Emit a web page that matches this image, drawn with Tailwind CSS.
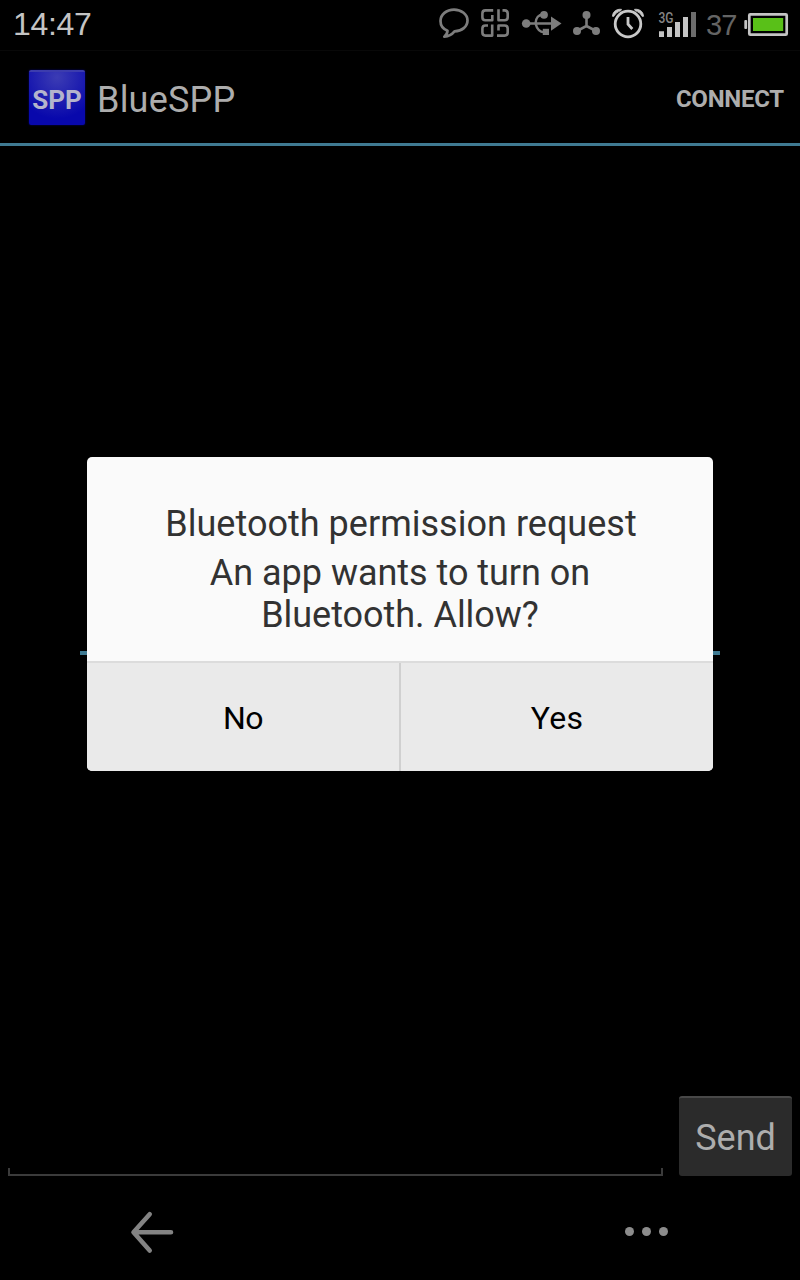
<!DOCTYPE html>
<html lang="en">
<head>
<meta charset="utf-8">
<title>BlueSPP</title>
<script src="https://cdn.jsdelivr.net/npm/@tailwindcss/browser@4"></script>
</head>
<body class="bg-black">
<div class="relative flex h-[1280px] w-[800px] flex-col overflow-hidden bg-black font-['Roboto',sans-serif]">
  <!-- Status bar -->
  <header class="flex h-[50px] items-start justify-between pl-[13px] font-['Liberation_Sans',sans-serif]">
    <span class="pt-[6px] text-[32px] leading-[36px] tracking-[-0.3px] text-[#c4c4c4]">14:47</span>
    <div class="flex h-[50px] items-start">
      <svg class="h-[50px] w-[39px]" viewBox="436 0 39 50" fill="none" stroke="#7d7d7d" stroke-width="2.7" stroke-linejoin="round"><path d="M447.500 30.700C443.500 29.200 440.500 25.500 440.500 21C440.500 14.500 446.500 9.600 454 9.600S467.500 14.500 467.500 20.500S462 31.200 454.500 31.400C452 34.500 448.500 36.400 444.300 36.700C446.300 35 447.400 33 447.500 30.700Z"/></svg>
      <svg class="h-[50px] w-[41px]" viewBox="475 0 41 50" fill="none" stroke="#7d7d7d" stroke-width="2.600" stroke-linejoin="round"><path d="M493.200 10.400H485.400Q482.400 10.400 482.400 13.400V17.300Q482.400 20.300 485.400 20.300H492.300V15M498.500 9.300V20.300H504.600Q507.700 20.300 507.700 17.300V13.400Q507.700 10.400 504.600 10.400H502.500M488 25.500H485.400Q482.400 25.500 482.400 28.500V32.600Q482.400 35.600 485.400 35.600H492.200V24.400M498.500 30.500V25.500H504.600Q507.700 25.500 507.700 28.500V32.600Q507.700 35.600 504.600 35.600H497"/></svg>
      <svg class="h-[50px] w-[51px]" viewBox="516 0 51 50" fill="#7d7d7d"><circle cx="526.200" cy="23.500" r="4.300"/><path d="M551 16.500L561.500 23.500L551 30.800Z"/><circle cx="544" cy="14.800" r="3.900"/><rect x="542.800" y="28.800" width="6.200" height="6.200"/><path d="M528 23.500H552M535.500 23.500C536 18 537.500 14.800 543 14.800M535.500 23.500C537 29 539 32.200 544 32.200" fill="none" stroke="#7d7d7d" stroke-width="2.500"/></svg>
      <svg class="h-[50px] w-[39px]" viewBox="567 0 39 50" fill="#7d7d7d"><circle cx="586.500" cy="14.900" r="4"/><circle cx="577" cy="31" r="4"/><circle cx="596" cy="31" r="4"/><path d="M586.500 15V26L577 31M586.500 26L596 31" fill="none" stroke="#7d7d7d" stroke-width="2.600"/></svg>
      <svg class="h-[50px] w-[45px]" viewBox="606 0 45 50" fill="none" stroke="#c8c8c8" stroke-width="2.800"><circle cx="628" cy="24" r="12.800"/><path d="M628 17V24.300L632.300 29"/><path d="M612.400 16.300C612.700 11.500 616.500 8.800 621.500 9.300L621 10.600C617.500 12 615.500 13.500 613.700 16.500ZM643.600 16.300C643.300 11.500 639.500 8.800 634.500 9.300L635 10.600C638.500 12 640.500 13.500 642.300 16.500Z" fill="#c8c8c8" stroke-width="0.800"/></svg>
      <svg class="h-[50px] w-[50px]" viewBox="651 0 50 50" fill="#c4c4c4"><path d="M659 31.300h5v5.700h-5zM667 27h5v10h-5zM675 22h5v15h-5zM683 17h5v20h-5z"/><path d="M691 12h5v25h-5z" fill="#6c6c6c"/><text x="658.500" y="22.800" font-family="Roboto, sans-serif" font-size="14.500" font-weight="500" textLength="15" lengthAdjust="spacingAndGlyphs" fill="#858585">3G</text></svg>
      <span class="w-[40px] pt-[9px] pl-[5px] text-[29px] leading-[32px] tracking-[-0.8px] text-[#646464]">37</span>
      <svg class="h-[50px] w-[59px]" viewBox="741 0 59 50"><rect x="749.300" y="14.300" width="37.400" height="20.400" rx="1" fill="none" stroke="#c4c4c4" stroke-width="2.700"/><rect x="744.300" y="20" width="2.800" height="9" rx="1" fill="#c4c4c4"/><rect x="753" y="18" width="30.200" height="13" fill="#59c018"/></svg>
    </div>
  </header>

  <!-- Action bar -->
  <div class="flex h-[96px] items-center justify-between border-t border-b-3 border-t-[#080808] border-b-[#3f7a92] pr-[16px] pl-[29px]">
    <div class="flex items-center gap-[12px]">
      <div class="flex h-[55px] w-[56px] items-center justify-center rounded-[2px] border-t-2 border-[#3c3cae] bg-[radial-gradient(circle_at_50%_10%,#3c3cb4_0%,#0808ac_75%)] pt-[3px] shadow-[0_0_2px_#000080]">
        <span class="text-[26px] leading-[28px] font-bold text-[#b4b4cc]">SPP</span>
      </div>
      <h1 class="pt-[6px] text-[36px] leading-[42px] tracking-[0.2px] text-[#adadad]">BlueSPP</h1>
    </div>
    <button class="pt-[4px] text-[24px] leading-[28px] font-bold tracking-[-0.25px] text-[#adadad]">CONNECT</button>
  </div>

  <main class="flex-1"></main>

  <!-- Message composer -->
  <div class="flex h-[80px] items-end pr-[8px] pl-[8px]">
    <div class="h-[8px] w-[655px] border-x-2 border-b-2 border-[#3b3b3b]"></div>
    <button class="ml-[16px] flex h-[80px] w-[113px] items-center justify-center rounded-[3px] border-t-2 border-t-[#484848] bg-[#2b2b2b] pt-[1px] text-[36px] leading-[42px] text-[#adadad]">Send</button>
  </div>

  <!-- Navigation bar -->
  <nav class="flex h-[104px] items-start justify-between pt-[34px] pr-[130px] pl-[129px]">
    <svg class="h-[46px] w-[46px]" viewBox="129 1210 46 46" fill="none" stroke="#838383" stroke-width="4.600" stroke-linecap="round" stroke-linejoin="round"><path d="M171 1232.300H134M149.700 1214.300L133.500 1232.300L149.700 1250.500"/></svg>
    <svg class="h-[46px] w-[46px]" viewBox="624 1210 46 46" fill="#8c8c8c"><circle cx="629.500" cy="1231.500" r="4.500"/><circle cx="646.500" cy="1231.500" r="4.500"/><circle cx="663.500" cy="1231.500" r="4.500"/></svg>
  </nav>

  <!-- Permission dialog -->
  <div class="absolute top-[651px] left-[80px] h-[4px] w-[640px] bg-[#3f7a92]"></div>
  <section class="absolute top-[457px] left-[87px] flex h-[314px] w-[626px] flex-col overflow-hidden rounded-[5px] bg-[#fafafa] text-center">
    <div class="flex h-[204px] flex-col pt-[46px] text-[36px] leading-[42px] text-[#323232]">
      <h2 class="pl-[2px] tracking-[0.02px]">Bluetooth permission request</h2>
      <p class="mt-[7px] tracking-[-0.03px]">An app wants to turn on<br>Bluetooth. Allow?</p>
    </div>
    <div class="flex flex-1 border-t-2 border-[#dcdcdc] bg-[#eaeaea] text-[32px] leading-[38px] text-black">
      <button class="w-[312px] pt-[2px] tracking-[-0.5px]">No</button>
      <div class="w-[2px] bg-[#d0d0d0]"></div>
      <button class="w-[312px] pt-[2px] tracking-[0.3px]">Yes</button>
    </div>
  </section>
</div>
</body>
</html>
